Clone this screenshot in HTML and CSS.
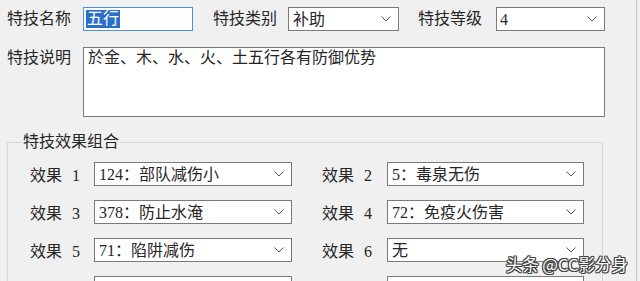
FILE: index.html
```html
<!DOCTYPE html>
<html lang="zh-CN">
<head>
<meta charset="utf-8">
<title>特技编辑</title>
<link rel="stylesheet" href="styles.css">
</head>
<body>
<div class="window">
  <div class="row-top">
    <span class="lbl">特技名称</span>
    <div class="name-input"><span class="selected">五行</span></div>
    <span class="lbl lbl-type">特技类别</span>
    <div class="combo combo-type"><span class="val">补助</span><svg class="chev" viewBox="0 0 10 6" width="10" height="6"><polyline points="0.5,0.5 5,5 9.5,0.5" fill="none" stroke="#555" stroke-width="1"/></svg></div>
    <span class="lbl lbl-level">特技等级</span>
    <div class="combo combo-level"><span class="val">4</span><svg class="chev" viewBox="0 0 10 6" width="10" height="6"><polyline points="0.5,0.5 5,5 9.5,0.5" fill="none" stroke="#555" stroke-width="1"/></svg></div>
  </div>
  <div class="row-desc">
    <span class="lbl lbl-desc">特技说明</span>
    <div class="textarea">於金、木、水、火、土五行各有防御优势</div>
  </div>
  <fieldset class="group">
    <legend class="group-title">特技效果组合</legend>
    <div class="effects">
      <div class="effect"><span class="elbl">效果<span class="num">1</span></span><div class="combo combo-eff"><span class="val">124：部队减伤小</span><svg class="chev" viewBox="0 0 10 6" width="10" height="6"><polyline points="0.5,0.5 5,5 9.5,0.5" fill="none" stroke="#555" stroke-width="1"/></svg></div></div>
      <div class="effect right"><span class="elbl">效果<span class="num">2</span></span><div class="combo combo-eff"><span class="val">5：毒泉无伤</span><svg class="chev" viewBox="0 0 10 6" width="10" height="6"><polyline points="0.5,0.5 5,5 9.5,0.5" fill="none" stroke="#555" stroke-width="1"/></svg></div></div>
      <div class="effect"><span class="elbl">效果<span class="num">3</span></span><div class="combo combo-eff"><span class="val">378：防止水淹</span><svg class="chev" viewBox="0 0 10 6" width="10" height="6"><polyline points="0.5,0.5 5,5 9.5,0.5" fill="none" stroke="#555" stroke-width="1"/></svg></div></div>
      <div class="effect right"><span class="elbl">效果<span class="num">4</span></span><div class="combo combo-eff"><span class="val">72：免疫火伤害</span><svg class="chev" viewBox="0 0 10 6" width="10" height="6"><polyline points="0.5,0.5 5,5 9.5,0.5" fill="none" stroke="#555" stroke-width="1"/></svg></div></div>
      <div class="effect"><span class="elbl">效果<span class="num">5</span></span><div class="combo combo-eff"><span class="val">71：陷阱减伤</span><svg class="chev" viewBox="0 0 10 6" width="10" height="6"><polyline points="0.5,0.5 5,5 9.5,0.5" fill="none" stroke="#555" stroke-width="1"/></svg></div></div>
      <div class="effect right"><span class="elbl">效果<span class="num">6</span></span><div class="combo combo-eff"><span class="val">无</span><svg class="chev" viewBox="0 0 10 6" width="10" height="6"><polyline points="0.5,0.5 5,5 9.5,0.5" fill="none" stroke="#555" stroke-width="1"/></svg></div></div>
      <div class="effect"><span class="elbl"></span><div class="combo combo-eff"></div></div>
      <div class="effect right"><span class="elbl"></span><div class="combo combo-eff"></div></div>
    </div>
  </fieldset>
  <div class="watermark">头条 @CC影分身</div>
</div>
</body>
</html>
```
FILE: styles.css
```css
html, body {
  margin: 0;
  padding: 0;
}
body {
  background: #f0f0f0;
  font-family: "Liberation Serif", "Noto Sans CJK SC", serif;
  font-size: 16px;
  color: #262626;
  width: 640px;
  height: 281px;
  overflow: hidden;
}
.window {
  position: relative;
  box-sizing: border-box;
  width: 637px;
  height: 281px;
  border-right: 1px solid #c6c6c6;
  padding: 7px 0 0 7px;
  overflow: hidden;
}
.row-top {
  display: flex;
  align-items: center;
  height: 24px;
}
.lbl {
  width: 64px;
  flex: none;
  margin-right: 12px;
  line-height: 18px;
  white-space: nowrap;
}
.lbl-type {
  margin-left: 20px;
  margin-right: 11px;
}
.lbl-level {
  margin-left: 19px;
  margin-right: 14px;
}
.name-input {
  box-sizing: border-box;
  width: 110px;
  height: 24px;
  background: #fff;
  border: 1px solid #4a92da;
  display: flex;
  align-items: center;
  padding-left: 2px;
}
.selected {
  background: #2a6fcc;
  color: #fff;
  line-height: 18px;
  padding: 0 1px;
}
.combo {
  box-sizing: border-box;
  height: 24px;
  background: #fff;
  border: 1px solid #7a7a7a;
  display: flex;
  align-items: center;
  padding-left: 4px;
  padding-right: 7px;
  flex: none;
}
.combo .val {
  line-height: 18px;
  white-space: nowrap;
  padding-top: 2px;
}
.combo .chev {
  margin-left: auto;
  display: block;
}
.combo-type { width: 111px; }
.combo-level { width: 109px; padding-left: 3px; }
.row-desc {
  display: flex;
  align-items: flex-start;
  margin-top: 16px;
}
.lbl-desc {
  padding-top: 2px;
}
.textarea {
  box-sizing: border-box;
  width: 522px;
  height: 70px;
  background: #fff;
  border: 1px solid #7a7a7a;
  padding: 1px 4px 0 4px;
  line-height: 18px;
}
.group {
  box-sizing: border-box;
  width: 596px;
  margin: 16px 0 0 0;
  border: 1px solid #d9d9d9;
  padding: 11px 0 10px 14px;
  min-width: 0;
}
.group-title {
  padding: 0 1px;
  line-height: 18px;
}
.effects {
  display: grid;
  grid-template-columns: 263px 263px;
  column-gap: 29px;
  row-gap: 14px;
  padding-left: 8px;
}
.effect {
  display: flex;
  align-items: center;
}
.elbl {
  width: 64px;
  flex: none;
  line-height: 18px;
  padding-top: 3px;
  white-space: nowrap;
}
.effect.right .elbl {
  width: 65px;
}
.num {
  margin-left: 10px;
}
.combo-eff {
  width: 198px;
}
.effect.right .combo-eff {
  width: 197px;
}
.watermark {
  position: absolute;
  right: 8px;
  bottom: 8px;
  font-family: "Noto Sans CJK SC", "Noto Sans", sans-serif;
  font-size: 16.5px;
  line-height: 18px;
  color: #fff;
  text-shadow: 1px 0 0 #444, -1px 0 0 #444, 0 1px 0 #444, 0 -1px 0 #444, 1px 1px 0 #444, -1px -1px 0 #444, 1px -1px 0 #444, -1px 1px 0 #444;
  white-space: nowrap;
}
```
